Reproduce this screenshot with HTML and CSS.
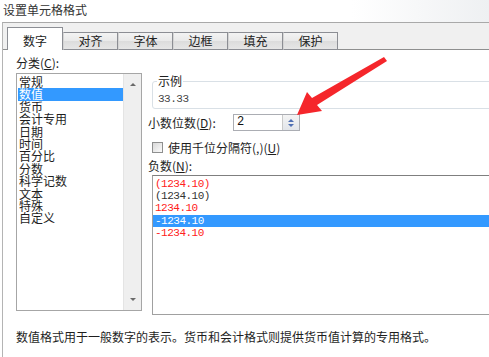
FILE: index.html
```html
<!DOCTYPE html>
<html lang="zh-CN">
<head>
  <meta charset="UTF-8" />
  <title>设置单元格格式</title>
  <link rel="stylesheet" href="styles.css">
</head>
<body>
  <div class="caption">设置单元格格式</div>

  <div class="dialog">
    <div class="tabs">
      <div class="tab-line tab-start"></div>
      <div class="tab active">数字</div>
      <div class="tab">对齐</div>
      <div class="tab">字体</div>
      <div class="tab">边框</div>
      <div class="tab">填充</div>
      <div class="tab">保护</div>
      <div class="tab-line tab-rest"></div>
    </div>

    <div class="panel">
      <div class="panel-main">
        <div class="category">
          <div class="field-label">分类(<u>C</u>):</div>
          <div class="listbox">
            <ul class="list-items">
              <li>常规</li>
              <li class="selected">数值</li>
              <li>货币</li>
              <li>会计专用</li>
              <li>日期</li>
              <li>时间</li>
              <li>百分比</li>
              <li>分数</li>
              <li>科学记数</li>
              <li>文本</li>
              <li>特殊</li>
              <li>自定义</li>
            </ul>
            <div class="scrollbar">
              <span class="scroll-up"></span>
              <span class="scroll-down"></span>
            </div>
          </div>
        </div>

        <div class="options">
          <fieldset class="sample">
            <legend>示例</legend>
            <div class="sample-value">33.33</div>
          </fieldset>

          <div class="decimal-row">
            <span class="decimal-label">小数位数(<u>D</u>):</span>
            <div class="spin">
              <span class="spin-value">2</span>
              <div class="spin-buttons">
                <span class="spin-up"></span>
                <span class="spin-down"></span>
              </div>
            </div>
          </div>

          <label class="check-row"><span class="checkbox"></span>使用千位分隔符(,)(<u>U</u>)</label>

          <div class="field-label neg-label">负数(<u>N</u>):</div>
          <ul class="neg-list">
            <li class="red">(1234.10)</li>
            <li>(1234.10)</li>
            <li class="red">1234.10</li>
            <li class="selected">-1234.10</li>
            <li class="red">-1234.10</li>
          </ul>
        </div>
      </div>

      <p class="desc">数值格式用于一般数字的表示。货币和会计格式则提供货币值计算的专用格式。</p>
    </div>
  </div>

  <!-- red annotation arrow drawn over the dialog -->
  <svg class="pointer" width="489" height="357" viewBox="0 0 489 357">
    <polygon points="297,115 307,92 312,98 384,57 387,61 317,105 322,111" fill="#f5262b" />
  </svg>
</body>
</html>
```

FILE: styles.css
```css
* {
  box-sizing: border-box;
  margin: 0;
  padding: 0;
}

body {
  width: 489px;
  height: 357px;
  overflow: hidden;
  position: relative;
  background: #fff;
  font-family: "Noto Sans CJK SC", sans-serif;
  font-size: 12px;
  color: #1e1e1e;
}

u {
  text-decoration: underline;
}

.caption {
  height: 22px;
  padding: 3px 0 0 3px;
  line-height: 14px;
  color: #333;
  background: linear-gradient(to right, #fff 72%, #eef0f2);
}

.dialog {
  width: 540px;
  margin-left: 2px;
  border-top: 1px solid #a9a9a9;
  border-left: 1px solid #b4b4b4;
  background: #f0f0f0;
}

/* tab strip */
.tabs {
  display: flex;
  align-items: flex-end;
  height: 27px;
}

.tab-line {
  height: 1px;
  background: #8e8f8f;
}

.tab-start {
  width: 4px;
}

.tab-rest {
  flex: 1;
}

.tab {
  width: 55px;
  height: 18px;
  border: 1px solid #8c8e94;
  border-left-color: #d4d4d4;
  background: linear-gradient(#f3f3f3, #e9e9e9 50%, #dcdcdc 51%, #e6e6e6);
  text-align: center;
  line-height: 16px;
  color: #222;
}

.tab.active {
  width: 56px;
  height: 23px;
  border-left-color: #8c8e94;
  border-bottom: none;
  background: #fff;
  padding-top: 5px;
}

/* panel */
.panel {
  height: 307px;
  background: #fff;
  padding: 6px 0 0 13px;
}

.panel-main {
  display: flex;
  gap: 6px;
}

.category {
  width: 126px;
}

.field-label {
  line-height: 14px;
}

.listbox {
  margin-top: 3px;
  height: 238px;
  border: 1px solid #a6a6a6;
  display: flex;
}

.list-items {
  flex: 1;
  list-style: none;
  padding: 2px 0 0 1px;
}

.list-items li {
  line-height: 12.4px;
  height: 12.4px;
  padding-left: 1px;
  white-space: nowrap;
}

.list-items li.selected {
  background: #3399ff;
  color: #fff;
}

.scrollbar {
  width: 18px;
  background: #efefef;
  border-left: 1px solid #e4e4e4;
  display: flex;
  flex-direction: column;
  justify-content: space-between;
  align-items: center;
  padding: 9px 0 9px;
}

.scroll-up,
.scroll-down {
  width: 0;
  height: 0;
  border-left: 3px solid transparent;
  border-right: 3px solid transparent;
}

.scroll-up {
  border-bottom: 3px solid #6a6a6a;
}

.scroll-down {
  border-top: 3px solid #6a6a6a;
}

.options {
  flex: 1;
}

.sample {
  margin: 18px 0 0 4px;
  border: 1px solid #d9e0e6;
  border-radius: 3px;
  padding: 4px 5px 2px 4px;
}

.sample legend {
  padding: 0 1px;
  line-height: 14px;
}

.sample-value,
.spin-value,
.neg-list li {
  font-family: "Liberation Mono", monospace;
  font-size: 11px;
  letter-spacing: -0.5px;
}

.sample-value {
  line-height: 14px;
  padding-left: 1px;
  color: #444;
}

.decimal-row {
  margin-top: 5px;
  height: 17px;
  display: flex;
  align-items: center;
}

.decimal-label {
  width: 85px;
}

.spin {
  width: 67px;
  height: 17px;
  border: 1px solid #abadb3;
  display: flex;
}

.spin-value {
  flex: 1;
  padding-left: 3px;
  line-height: 15px;
  font-size: 12px;
  color: #111;
}

.spin-buttons {
  width: 17px;
  border-left: 1px solid #c9c9c9;
  background: linear-gradient(#f4f4f4, #e2e5ea);
  display: flex;
  flex-direction: column;
  justify-content: center;
  align-items: center;
  gap: 2px;
}

.spin-up,
.spin-down {
  width: 0;
  height: 0;
  border-left: 3px solid transparent;
  border-right: 3px solid transparent;
}

.spin-up {
  border-bottom: 3px solid #4f6fb3;
}

.spin-down {
  border-top: 3px solid #4f6fb3;
}

.check-row {
  margin: 8px 0 0 4px;
  height: 17px;
  display: flex;
  align-items: center;
}

.checkbox {
  width: 11px;
  height: 11px;
  border: 1px solid #8e8f8f;
  background: linear-gradient(135deg, #d8d8d8, #fbfbfb);
  margin-right: 5px;
}

.neg-label {
  margin-top: 3px;
}

.neg-list {
  margin: 2px 0 0 4px;
  height: 140px;
  border: 1px solid #a0a0a0;
  border-top-color: #7f7f7f;
  list-style: none;
  padding-top: 2px;
}

.neg-list li {
  height: 12.2px;
  line-height: 12.2px;
  padding-left: 2px;
  color: #333;
}

.neg-list li.red {
  color: #ff2020;
}

.neg-list li.selected {
  background: #3399ff;
  color: #fff;
}

.desc {
  margin-top: 15px;
  line-height: 14px;
}

.pointer {
  position: absolute;
  top: 0;
  left: 0;
  pointer-events: none;
}
```
